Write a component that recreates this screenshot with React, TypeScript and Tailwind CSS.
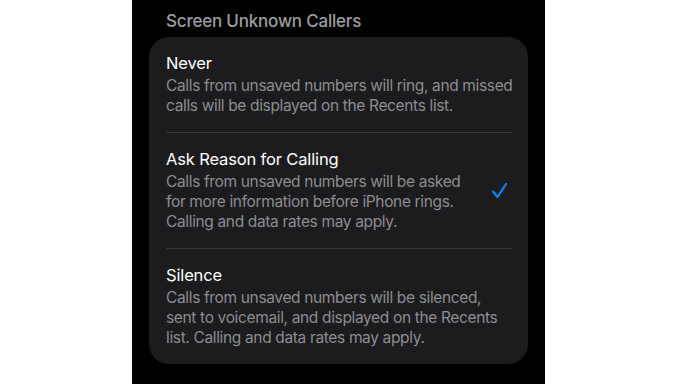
import React from "react";

const font = { fontFamily: "Inter, 'Noto Sans', sans-serif" };

function Row({ title, lines, checked }: { title: string; lines: string[]; checked?: boolean }) {
  return (
    <div className="flex items-center pt-[15px] pb-[16px] pr-[20px]">
      <div className="flex-1 flex flex-col gap-[2px]">
        <div className="text-[16.5px] leading-[22px] tracking-[-0.15px] text-white whitespace-nowrap">{title}</div>
        <div className="text-[15.5px] leading-[20px] tracking-[-0.35px] text-[#8d8d92] whitespace-nowrap">
          {lines.map((l, i) => (
            <div key={i}>{l}</div>
          ))}
        </div>
      </div>
      {checked && (
        <svg width="17" height="17" viewBox="0 0 17 17" className="shrink-0">
          <path d="M2 9.5 L6.5 15 L15 2" fill="none" stroke="#0a84ff" strokeWidth="2.2" strokeLinecap="round" strokeLinejoin="round" />
        </svg>
      )}
    </div>
  );
}

export default function App() {
  return (
    <div className="w-[685px] h-[384px] bg-white flex pl-[132px]" style={font}>
      <div className="w-[413px] h-full bg-black flex flex-col px-[17px] pt-[10px]">
        <div className="text-[17px] leading-[22px] font-medium tracking-[-0.2px] text-[#9d9da2] pl-[17px] mb-[5px] whitespace-nowrap">
          Screen Unknown Callers
        </div>
        <div className="w-[379px] bg-[#1c1c1e] rounded-[20px] pl-[17px]">
          <Row
            title="Never"
            lines={["Calls from unsaved numbers will ring, and missed", "calls will be displayed on the Recents list."]}
          />
          <div className="h-px bg-[#38383a] mr-[16px]" />
          <Row
            title="Ask Reason for Calling"
            checked
            lines={[
              "Calls from unsaved numbers will be asked",
              "for more information before iPhone rings.",
              "Calling and data rates may apply.",
            ]}
          />
          <div className="h-px bg-[#38383a] mr-[16px]" />
          <Row
            title="Silence"
            lines={[
              "Calls from unsaved numbers will be silenced,",
              "sent to voicemail, and displayed on the Recents",
              "list. Calling and data rates may apply.",
            ]}
          />
        </div>
      </div>
    </div>
  );
}
